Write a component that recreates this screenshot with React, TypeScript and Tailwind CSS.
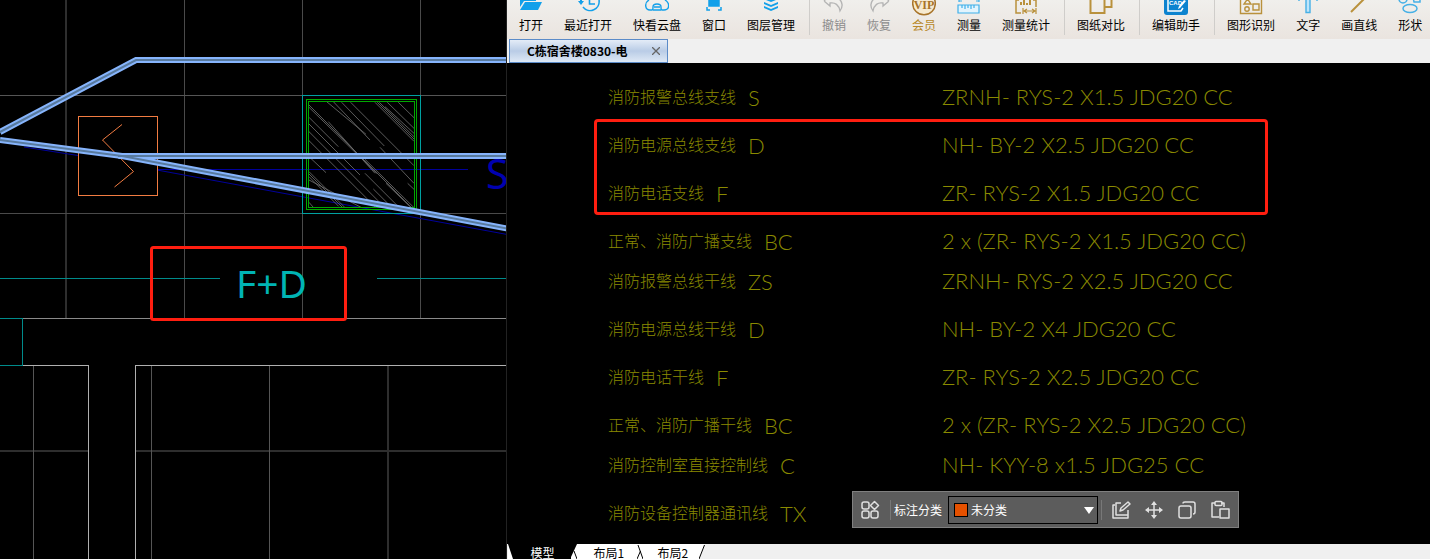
import type { ReactNode } from 'react';

interface Tool {
  label: string;
  icon: ReactNode;
  tone?: string;
}

const BLUE = '#12a0ea';
const GOLD = '#b9913c';

const toolGroups: Tool[][] = [
  [
    {
      label: '打开',
      icon: (
        <g fill={BLUE}>
          <path d="M1 0h16v1H5L1 7z" />
          <path d="M6 2h17l-4 8H1z" />
        </g>
      ),
    },
    {
      label: '最近打开',
      icon: (
        <g fill="none" stroke={BLUE} strokeWidth="1.6">
          <path d="M23 0a9 9 0 0 1-16 7" />
          <path d="M13.500 0v4H19" />
          <path d="M4 0h2v1h2L5 5 2 1h2z" fill={BLUE} stroke="none" />
        </g>
      ),
    },
    {
      label: '快看云盘',
      icon: (
        <g fill="none" stroke={BLUE} strokeWidth="1.4">
          <path d="M4 0C-1 3 0 10 5 10h2c1 0 1-1 1-3 0-4 8-4 8 0 0 2 0 3 1 3h2c6 0 6-7 1-10" />
          <path d="M8 10h8M9 7h6" />
        </g>
      ),
    },
    {
      label: '窗口',
      icon: (
        <g fill="none" stroke={BLUE} strokeWidth="1.5">
          <path d="M7 0h10v6H7z" fill={BLUE} />
          <path d="M5 7v3h3M19 7v3h-3" />
        </g>
      ),
    },
    {
      label: '图层管理',
      icon: (
        <g fill={BLUE}>
          <path d="M7 0h10l-5 2z" />
          <path d="M5 2l7 3 7-3v2l-7 3-7-3z" />
          <path d="M5 6l7 3 7-3v2l-7 3-7-3z" />
        </g>
      ),
    },
  ],
  [
    {
      label: '撤销',
      tone: 'text-[#8c8c8c]',
      icon: <path d="M2 1l6 5V3c5-1 9 2 10 8 4-6 2-10-2-13M2 1l2-2" fill="none" stroke="#b4b4b4" strokeWidth="1.3" />,
    },
    {
      label: '恢复',
      tone: 'text-[#8c8c8c]',
      icon: <path d="M22 1l-6 5V3C11 2 7 5 6 11 2 5 4 1 8-2M22 1l-2-2" fill="none" stroke="#b4b4b4" strokeWidth="1.3" />,
    },
    {
      label: '会员',
      tone: 'text-[#b8892a]',
      icon: (
        <g>
          <circle cx="12" cy="3.500" r="11.300" fill="#f6ead0" stroke="#a8742a" strokeWidth="1.500" />
          <text x="12" y="9" textAnchor="middle" fontFamily="Liberation Serif, serif" fontWeight="700" fontSize="12" fill="#a8742a">
            VIP
          </text>
        </g>
      ),
    },
    {
      label: '测量',
      icon: (
        <g fill="none" stroke="#3fb0ea" strokeWidth="1.200">
          <path d="M1 5h21v8H1z" fill="#e2f4fd" />
          <path d="M5 5v3M8 5v4M11 5v3M14 5v4M17 5v3M2 1h3M19 1h3M2 0v2M22 0v2" />
        </g>
      ),
    },
    {
      label: '测量统计',
      icon: (
        <g fill="none" stroke={GOLD} strokeWidth="1.500">
          <path d="M5 0H2v13h5M19 0h3v7" />
          <path d="M7 2v3M10 0v5M13 3v2M16 0v5" strokeWidth="2" />
          <path d="M9 8v6M22 8v6M10 11h11M13 9l-3 2 3 2M18 9l3 2-3 2" strokeWidth="1.200" />
        </g>
      ),
    },
  ],
  [
    {
      label: '图纸对比',
      icon: <path d="M1.500-4h14v17h-14zM15.500 7H22.500V0" fill="none" stroke={GOLD} strokeWidth="2" />,
    },
  ],
  [
    {
      label: '编辑助手',
      icon: (
        <g>
          <rect y="-9" width="24" height="24" rx="3" fill="#0c83cf" />
          <path d="M4 0v11h13l2-3" fill="none" stroke="#fff" strokeWidth="1.500" />
          <path d="M22 1l-6 7-2 1 1-3 5-6z" fill="#fff" />
          <text x="5" y="5" fontFamily="Liberation Sans, sans-serif" fontWeight="700" fontSize="6" fill="#fff">
            CAD
          </text>
        </g>
      ),
    },
  ],
  [
    {
      label: '图形识别',
      icon: (
        <g fill="none" stroke={GOLD} strokeWidth="1.400">
          <path d="M1.500-4h21v17.500h-21z" />
          <path d="M5 4h7L8.500-1zM14 4h6v6h-6z" />
          <circle cx="8" cy="9" r="2.200" />
        </g>
      ),
    },
    {
      label: '文字',
      icon: <path d="M3-2v3M21-2v3M10 0v12.500h4V0" fill="#bfe5fa" stroke="#46b0e6" strokeWidth="1.400" />,
    },
    {
      label: '画直线',
      icon: <path d="M4 12L17-1" stroke={GOLD} strokeWidth="2" />,
    },
    {
      label: '形状',
      icon: (
        <g fill="none" stroke="#46b0e6" strokeWidth="1.500">
          <circle cx="5" cy="-1" r="4" />
          <path d="M15-3h7v5h-6z" />
          <ellipse cx="12" cy="8.500" rx="7" ry="4" />
        </g>
      ),
    },
  ],
];

interface Circuit {
  name: string;
  code: string;
  spec: string;
}

const circuitGroups: Circuit[][] = [
  [
    { name: '消防报警总线支线', code: 'S', spec: 'ZRNH- RYS-2 X1.5 JDG20 CC' },
    { name: '消防电源总线支线', code: 'D', spec: 'NH- BY-2 X2.5 JDG20 CC' },
    { name: '消防电话支线', code: 'F', spec: 'ZR- RYS-2 X1.5 JDG20 CC' },
    { name: '正常、消防广播支线', code: 'BC', spec: '2 x (ZR- RYS-2 X1.5 JDG20 CC)' },
  ],
  [
    { name: '消防报警总线干线', code: 'ZS', spec: 'ZRNH- RYS-2 X2.5 JDG20 CC' },
    { name: '消防电源总线干线', code: 'D', spec: 'NH- BY-2 X4 JDG20 CC' },
    { name: '消防电话干线', code: 'F', spec: 'ZR- RYS-2 X2.5 JDG20 CC' },
    { name: '正常、消防广播干线', code: 'BC', spec: '2 x (ZR- RYS-2 X2.5 JDG20 CC)' },
  ],
  [
    { name: '消防控制室直接控制线', code: 'C', spec: 'NH- KYY-8 x1.5 JDG25 CC' },
    { name: '消防设备控制器通讯线', code: 'TX', spec: '' },
  ],
];

const BEAMS = 'M0 132L136 60H510M0 140L122 156L510 229M118 156H510';

function FloorPlan() {
  return (
    <svg viewBox="0 0 507 559" preserveAspectRatio="xMinYMin slice" className="block h-full w-full" role="img" aria-label="平面图">
      {/* ceiling grid */}
      <g fill="none" shapeRendering="crispEdges">
        <path d="M66 0V318M0 451H88M136 451H506M388 366V559" stroke="#2e2e2e" strokeWidth="2" />
        <path d="M184.500 0V318M302.500 0V318M420.500 0V318M0 213.500H507" stroke="#4a4a4a" />
        <path d="M0 95.500H507M33.500 366V559M151.500 366V559M269.500 366V559" stroke="#555" />
        <path d="M23 318.500H507" stroke="#8a8a8a" />
        <path d="M23 365.500H88.500V559M507 365.500H135.500V559" stroke="#b0b0b0" />
        <path d="M0 278.500H220M377 278.500H507M0 318.500H22.500V365.500H0" stroke="#008b8b" />
      </g>

      <path d="M24 147L78 155.500M157 169.500H468M157 170L510 235" fill="none" stroke="#00009a" />
      <text x="486" y="189" fontFamily="Noto Sans, sans-serif" fontSize="41" fill="#0000b0">
        S
      </text>

      {/* shaft with hatch */}
      <path
        transform="translate(250 40) scale(.3333)"
        d="M177 195L485 503M177 202L380 400M177 232L265 320M177 252L330 405M177 275L400 498M177 302L375 500M177 350L228 398M177 395L285 503M177 402L276 501M177 410L266 499M230 185L348 283M250 185L360 300M275 187L403 318M302 187L492 377M375 187L492 304M382 187L492 297M388 187L492 290M405 200L492 280M412 187L492 265M445 187L492 233M235 245L375 400M390 322L492 430M345 358L492 503M345 400L440 495M370 447L420 497M473 430L492 448M408 430L480 500M177 487L190 502M177 420L333 502"
        fill="none"
        stroke="#6e6e6e"
        strokeWidth="2.500"
      />
      <g fill="none" shapeRendering="crispEdges">
        <path d="M302.500 95.500h118v118h-118z" stroke="#00a0a0" />
        <path d="M306.500 99.500h110v110h-110zM308.500 101.500h106v106h-106z" stroke="#00a800" />
      </g>

      {/* call point */}
      <path d="M78.500 116.500h79v79h-79z" fill="none" stroke="#f27c42" shapeRendering="crispEdges" />
      <path d="M122 124.500L102.500 140L133.500 171.500L114.500 187" fill="none" stroke="#f27c42" />

      <g fill="none">
        <path d={BEAMS} stroke="#86b4fc" strokeWidth="6" />
        <path d={BEAMS} stroke="#587a9e" strokeWidth="2" />
      </g>
      <path d="M506.500 0V559" stroke="#222" />

      <text x="236" y="298" fontFamily="Noto Sans, sans-serif" fontSize="39" fill="#00b4b4">
        F+D
      </text>
      <rect x="151.500" y="247.500" width="194" height="72" rx="2" fill="none" stroke="#ff1e10" strokeWidth="3" />
    </svg>
  );
}

function ToolButton({ label, icon, tone = 'text-black' }: Tool) {
  return (
    <button type="button" className={`flex flex-col items-center whitespace-nowrap text-xs leading-4 ${tone}`}>
      <svg viewBox="0 0 24 16" className="mb-px h-4 w-6" aria-hidden="true">
        {icon}
      </svg>
      {label}
    </button>
  );
}

function Toolbar() {
  return (
    <div className="flex h-[39px] shrink-0 overflow-hidden bg-linear-to-b from-[#f0efec] to-[#eae4df] pb-1">
      {toolGroups.map((group, i) => (
        <div key={i} className="flex shrink-0 gap-[21px] border-r border-[#cfcdca] pr-3.5 pl-3 last:border-r-0">
          {group.map((tool) => (
            <ToolButton key={tool.label} {...tool} />
          ))}
        </div>
      ))}
    </div>
  );
}

function CircuitTable() {
  return (
    <div className="relative w-[660px]">
      <table className="w-full table-fixed border-collapse text-left font-['Lato','Noto_Sans_CJK_SC',sans-serif] text-[22px] font-light whitespace-nowrap text-[#8a8a00]">
        {circuitGroups.map((group, i) => (
          <tbody key={i}>
            {group.map((row) => (
              <tr key={row.name} className="h-12 align-top last:h-10">
                <td className="w-[334px] p-0">
                  <div className="flex h-10 items-center gap-3">
                    <span className="text-base">{row.name}</span>
                    {row.code}
                  </div>
                </td>
                <td className="p-0 leading-10">{row.spec}</td>
              </tr>
            ))}
          </tbody>
        ))}
      </table>
      {/* highlighted D and F branches */}
      <div className="absolute top-[42px] -left-3.5 h-24 w-[674px] rounded-sm border-3 border-[#ff1e10]" />
    </div>
  );
}

function IconButton({ label, children }: { label: string; children: ReactNode }) {
  return (
    <button type="button" aria-label={label} className="text-[#e0e0e0]">
      <svg viewBox="0 0 20 20" fill="none" stroke="currentColor" strokeWidth="1.500" strokeLinejoin="round" className="h-5 w-5">
        {children}
      </svg>
    </button>
  );
}

function AnnotationBar() {
  return (
    <div className="absolute right-[191px] bottom-4 flex h-[37px] w-[387px] items-center border border-[#808080] bg-[#5c5c5c] pl-[7px] text-xs text-white">
      <IconButton label="分类">
        <rect x="2" y="2" width="7" height="7" rx="2" />
        <path d="M14.500 1.500l4 4-4 4-4-4z" />
        <rect x="2" y="11" width="7" height="7" rx="2" />
        <rect x="11" y="11" width="7" height="7" rx="2" />
      </IconButton>
      <span className="ml-2.5 h-5 w-px bg-[#787878]" />
      <label htmlFor="category" className="ml-[3px] whitespace-nowrap">
        标注分类
      </label>
      <div className="relative ml-1.5 h-7 w-[150px]">
        <select id="category" className="h-full w-full appearance-none border border-black bg-[#5c5c5c] pl-[22px] text-xs">
          <option>未分类</option>
        </select>
        <span className="pointer-events-none absolute top-[7px] left-1.5 h-3.5 w-3.5 border border-black bg-[#e65100]" />
        <svg viewBox="0 0 10 7" className="pointer-events-none absolute top-[11px] right-1 h-[7px] w-2.5" aria-hidden="true">
          <path d="M0 0h10L5 7z" fill="#fff" />
        </svg>
      </div>
      <span className="ml-[3px] h-5 w-px bg-[#787878]" />
      <div className="ml-[9px] flex gap-[13px]">
        <IconButton label="编辑">
          <path d="M10 3H5v12h12v-5M4 5H2v13h15v-3" />
          <path d="M9 11l1-3 7-6 2 2-7 6z" />
        </IconButton>
        <IconButton label="移动">
          <path d="M10 3v14M3 10h14" />
          <path d="M10 1l3 4H7zM10 19l3-4H7zM1 10l4-3v6zM19 10l-4-3v6z" fill="currentColor" stroke="none" />
        </IconButton>
        <IconButton label="复制">
          <rect x="2" y="6" width="12" height="12" rx="2" />
          <path d="M6 3.500Q6 2 8 2h8q2 0 2 2v8q0 2-2 2" />
        </IconButton>
        <IconButton label="粘贴">
          <path d="M5 3H2v14h7M11 3h3v4" />
          <rect x="5" y="1.500" width="7" height="4" rx="1" />
          <path d="M10 9h9v9h-9z" />
        </IconButton>
      </div>
    </div>
  );
}

function LayoutTabs() {
  return (
    <div className="flex h-[15px] shrink-0 items-start overflow-hidden bg-[#f0f0f0] pl-px text-xs leading-4 text-black">
      <svg viewBox="0 0 6 15" className="h-[15px] w-1.5 shrink-0 bg-white" aria-hidden="true">
        <path d="M0 0h6v15H5z" />
      </svg>
      <button type="button" className="h-[18px] w-[57px] bg-black text-white">
        模型
      </button>
      <svg viewBox="0 0 6 15" className="h-[15px] w-1.5 shrink-0 bg-white" aria-hidden="true">
        <path d="M0 0h6L0 13z" />
        <path d="M3 7l3 8" stroke="#000" />
      </svg>
      <button type="button" className="h-[18px] w-[60px] bg-white pl-1">
        布局1
      </button>
      <svg viewBox="0 0 6 15" className="h-[15px] w-1.5 shrink-0 bg-white" aria-hidden="true">
        <path d="M1 1l5 14M3.500 7L0 15" fill="none" stroke="#000" />
      </svg>
      <button type="button" className="h-[18px] w-14 bg-white pl-1">
        布局2
      </button>
      <svg viewBox="0 0 6 15" className="h-[15px] w-1.5 shrink-0" aria-hidden="true">
        <path d="M0 0h5.500L0 15z" fill="#fff" />
        <path d="M5.500 1L0 15" stroke="#000" />
      </svg>
    </div>
  );
}

export default function App() {
  return (
    <div className="flex h-screen overflow-hidden bg-black font-['Noto_Sans_CJK_SC',sans-serif]">
      <section className="w-[35.45%] shrink-0 overflow-hidden">
        <FloorPlan />
      </section>
      <main className="flex min-w-0 flex-1 flex-col">
        <Toolbar />
        <div className="flex h-6 shrink-0 bg-[#f0f0f0] pl-0.5">
          <div className="flex items-center gap-6 border border-[#5b8bc8] bg-linear-to-b from-[#e4ecf7] via-[#b9cce6] to-[#dfe9f5] pr-[7px] pl-[17px] text-xs font-bold whitespace-nowrap">
            C栋宿舍楼0830-电
            <button type="button" aria-label="关闭" className="text-[#666]">
              <svg viewBox="0 0 8 8" className="h-2 w-2" stroke="currentColor" strokeWidth="1.300">
                <path d="M0 0l8 8M8 0L0 8" />
              </svg>
            </button>
          </div>
        </div>
        <div className="relative min-h-0 flex-1 overflow-hidden pt-3.5 pl-[101px]">
          <CircuitTable />
          <AnnotationBar />
        </div>
        <LayoutTabs />
      </main>
    </div>
  );
}
